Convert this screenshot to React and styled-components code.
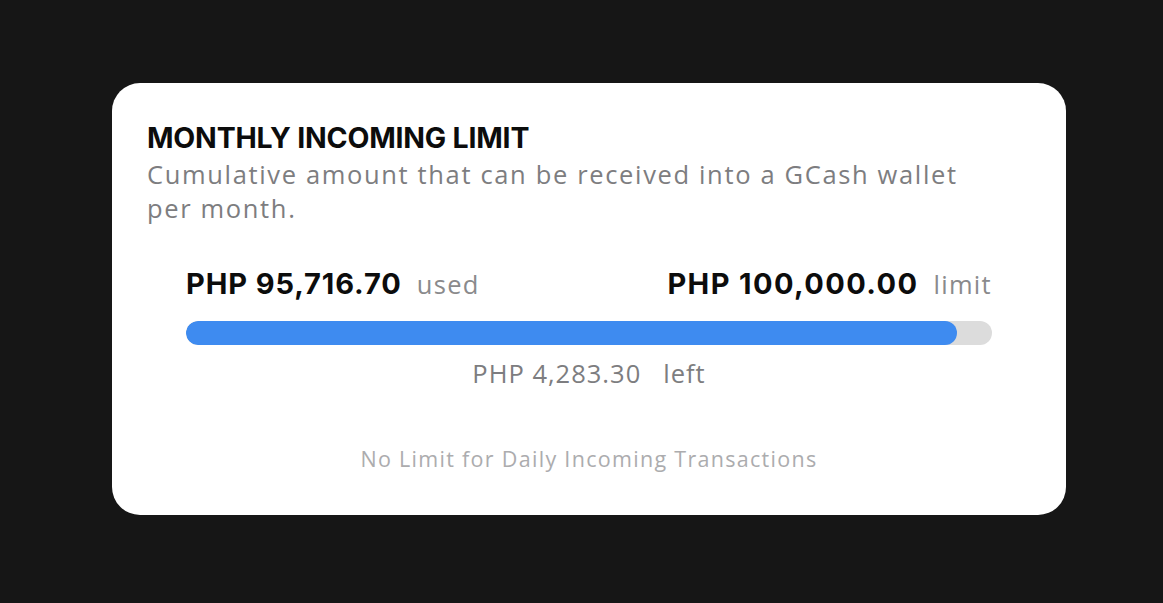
import React from 'react';
import styled, { createGlobalStyle } from 'styled-components';

const GlobalStyle = createGlobalStyle`
  html, body {
    margin: 0;
    background: #161616;
  }
  body {
    font-family: 'Open Sans', 'Liberation Sans', sans-serif;
  }
`;

const Page = styled.div`
  width: 1163px;
  height: 603px;
  box-sizing: border-box;
  padding: 83px 97px 0 112px;
`;

const Card = styled.section`
  width: 954px;
  height: 432px;
  box-sizing: border-box;
  background: #fff;
  border-radius: 28px;
  padding: 38px 35px 0 35px;
  display: flex;
  flex-direction: column;
`;

const Title = styled.h2`
  margin: 0;
  font-family: Inter, 'Liberation Sans', sans-serif;
  font-weight: 700;
  font-size: 28.5px;
  line-height: 34px;
  color: #0c0c0c;
  letter-spacing: -0.2px;
`;

const Subtitle = styled.p`
  margin: 2px 0 0;
  font-family: 'Open Sans', 'Liberation Sans', sans-serif;
  font-size: 25.5px;
  line-height: 34px;
  color: #7d7d80;
  letter-spacing: 1.65px;
`;

const Usage = styled.div`
  margin: 41px 39px 0 39px;
  display: flex;
  flex-direction: column;
`;

const AmountRow = styled.div`
  display: flex;
  justify-content: space-between;
  align-items: baseline;
`;

const Amount = styled.div`
  display: flex;
  align-items: baseline;
  gap: 15px;
`;

const Figure = styled.span`
  font-family: Inter, 'Liberation Sans', sans-serif;
  font-weight: 700;
  font-size: 29px;
  color: #0c0c0c;
  letter-spacing: ${({ $wide }) => ($wide ? '1.4px' : '0.9px')};
`;

const Unit = styled.span`
  font-size: 25.5px;
  color: #8a8a8c;
  letter-spacing: 1.3px;
`;

const Track = styled.div`
  margin-top: 20px;
  height: 24px;
  border-radius: 12px;
  background: #dcdcdc;
  overflow: hidden;
`;

const Fill = styled.div`
  height: 100%;
  border-radius: 12px;
  background: #3e8bf0;
`;

const Left = styled.div`
  margin-top: 11px;
  display: flex;
  justify-content: center;
  gap: 22px;
  font-size: 25.5px;
  color: #7d7d80;
  letter-spacing: 1px;
`;

const Footnote = styled.p`
  margin: 54px 0 0;
  text-align: center;
  font-size: 21.5px;
  color: #acacae;
  letter-spacing: 1.3px;
`;

export default function App() {
  const used = 95716.7;
  const limit = 100000;
  const pct = (used / limit) * 100;
  return (
    <>
      <GlobalStyle />
      <Page>
        <Card>
          <Title>MONTHLY INCOMING LIMIT</Title>
          <Subtitle>
            Cumulative amount that can be received into a GCash wallet
            <br />
            per month.
          </Subtitle>
          <Usage>
            <AmountRow>
              <Amount>
                <Figure>PHP 95,716.70</Figure>
                <Unit>used</Unit>
              </Amount>
              <Amount>
                <Figure $wide>PHP 100,000.00</Figure>
                <Unit>limit</Unit>
              </Amount>
            </AmountRow>
            <Track>
              <Fill style={{ width: `${pct}%` }} />
            </Track>
            <Left>
              <span>PHP 4,283.30</span>
              <span>left</span>
            </Left>
          </Usage>
          <Footnote>No Limit for Daily Incoming Transactions</Footnote>
        </Card>
      </Page>
    </>
  );
}
